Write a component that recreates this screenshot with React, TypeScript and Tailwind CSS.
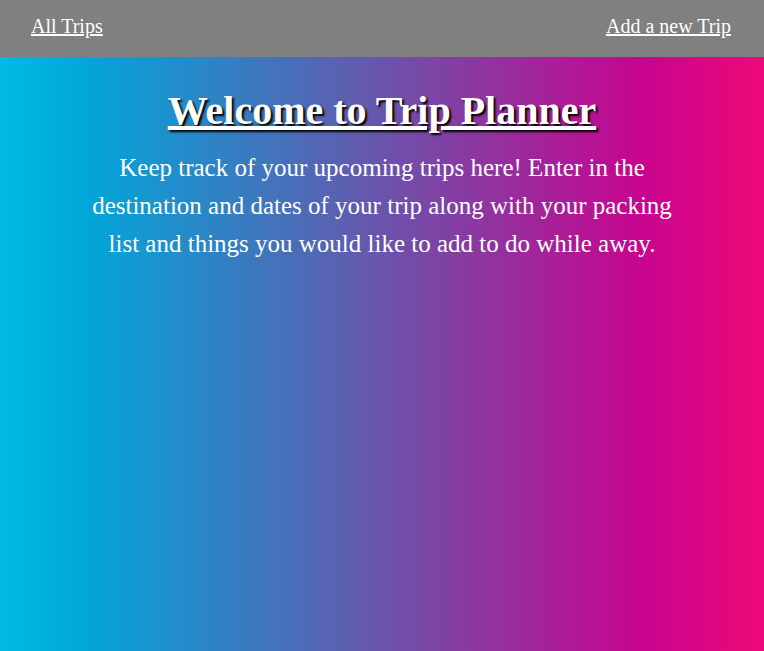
import React from 'react';

const App = () => {
    return (
        <div className="min-h-[651px] flex flex-col font-['Liberation_Serif','Times_New_Roman',serif] text-white bg-[linear-gradient(to_right,#00bae6_0%,#00a7d9_11%,#6459ad_48%,#c8048e_84%,#ee0979_100%)]">
            {/* Nav */}
            <nav className="h-[57px] bg-[#808080] flex items-center justify-between pl-[31px] pr-[33px] pb-[6px] text-[20px]">
                <a href="#" className="underline">All Trips</a>
                <a href="#" className="underline">Add a new Trip</a>
            </nav>

            {/* Intro */}
            <div className="flex flex-col items-center text-center pt-[28px]">
                <h1 className="text-[40px] font-bold underline leading-[52px] [text-shadow:2px_2px_2px_#000]">
                    Welcome to Trip Planner
                </h1>
                <p className="mt-[12px] max-w-[590px] text-[25px] leading-[38px]">
                    Keep track of your upcoming trips here! Enter in the destination and dates of your trip along with your packing list and things you would like to add to do while away.
                </p>
            </div>
        </div>
    );
};

export default App;
